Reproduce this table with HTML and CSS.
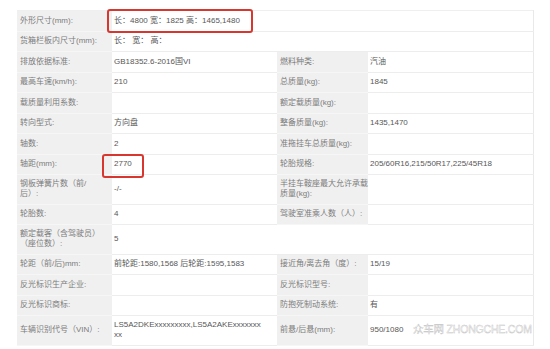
FILE: index.html
```html
<!DOCTYPE html>
<html lang="zh-CN">
<head>
<meta charset="utf-8">
<title>车辆参数</title>
<link rel="stylesheet" href="styles.css">
</head>
<body>
<div class="page">
  <div class="sheet">
    <table class="spec">
      <colgroup>
        <col class="c-lab1"><col class="c-val1"><col class="c-lab2"><col class="c-val2">
      </colgroup>
      <tbody>
        <tr><td class="lab">外形尺寸(mm):</td><td class="val" colspan="3">长：4800 宽：1825 高：1465,1480</td></tr>
        <tr><td class="lab">货箱栏板内尺寸(mm):</td><td class="val" colspan="3">长： 宽： 高：</td></tr>
        <tr><td class="lab">排放依据标准:</td><td class="val">GB18352.6-2016国VI</td><td class="lab">燃料种类:</td><td class="val">汽油</td></tr>
        <tr><td class="lab">最高车速(km/h):</td><td class="val">210</td><td class="lab">总质量(kg):</td><td class="val">1845</td></tr>
        <tr><td class="lab">载质量利用系数:</td><td class="val"></td><td class="lab">额定载质量(kg):</td><td class="val"></td></tr>
        <tr><td class="lab">转向型式:</td><td class="val">方向盘</td><td class="lab">整备质量(kg):</td><td class="val">1435,1470</td></tr>
        <tr><td class="lab">轴数:</td><td class="val">2</td><td class="lab">准拖挂车总质量(kg):</td><td class="val"></td></tr>
        <tr><td class="lab">轴距(mm):</td><td class="val">2770</td><td class="lab">轮胎规格:</td><td class="val">205/60R16,215/50R17,225/45R18</td></tr>
        <tr class="tall"><td class="lab">钢板弹簧片数（前/<br>后）:</td><td class="val">-/-</td><td class="lab">半挂车鞍座最大允许承载<br>质量(kg):</td><td class="val"></td></tr>
        <tr><td class="lab">轮胎数:</td><td class="val">4</td><td class="lab">驾驶室准乘人数（人）:</td><td class="val"></td></tr>
        <tr class="tall"><td class="lab">额定载客（含驾驶员）<br>（座位数）:</td><td class="val" colspan="3">5</td></tr>
        <tr><td class="lab">轮距（前/后)mm:</td><td class="val">前轮距:1580,1568 后轮距:1595,1583</td><td class="lab">接近角/离去角（度）:</td><td class="val">15/19</td></tr>
        <tr><td class="lab">反光标识生产企业:</td><td class="val"></td><td class="lab">反光标识型号:</td><td class="val"></td></tr>
        <tr><td class="lab">反光标识商标:</td><td class="val"></td><td class="lab">防抱死制动系统:</td><td class="val">有</td></tr>
        <tr class="tall"><td class="lab">车辆识别代号（VIN）:</td><td class="val nowrap">LS5A2DKExxxxxxxxx,LS5A2AKExxxxxxx<br>xx</td><td class="lab">前悬/后悬(mm):</td><td class="val">950/1080</td></tr>
      </tbody>
    </table>
    <div class="mark mark-dim"></div>
    <div class="mark mark-wb"></div>
    <div class="watermark">众车网 ZHONGCHE.COM</div>
  </div>
</div>
</body>
</html>
```

FILE: styles.css
```css
* { box-sizing: border-box; }
html, body { margin: 0; padding: 0; background: #fff; }
body {
  font-family: "Liberation Sans", "Noto Sans CJK SC", sans-serif;
  font-size: 8px;
  width: 550px;
  height: 349px;
  overflow: hidden;
}
.page { padding: 10px 0 0 17px; }
.sheet { position: relative; width: 516px; }
.spec {
  width: 516px;
  table-layout: fixed;
  border-collapse: collapse;
  border-top: 1px solid #efefef;
  border-right: 1px solid #e9e9e9;
}
.c-lab1 { width: 95px; }
.c-val1 { width: 165px; }
.c-lab2 { width: 91px; }
.c-val2 { width: 165px; }
.spec tr { height: 20.5px; }
.spec tr.tall { height: 29.5px; }
.spec td {
  padding: 0 2px 0 2px;
  vertical-align: middle;
  line-height: 10px;
  border-bottom: 1px solid #ededed;
  white-space: nowrap;
  overflow: visible;
}
.spec td.lab {
  background: #f0f0f0;
  color: #7c7c7c;
  padding-left: 3px;
  border-bottom-color: #f6f6f6;
}
.spec td.val { color: #575757; }
.mark {
  position: absolute;
  border: 2px solid #d8372f;
  border-radius: 3px;
}
.mark-dim { left: 90px; top: -1px; width: 146px; height: 24px; }
.mark-wb { left: 85px; top: 144px; width: 42px; height: 24px; }
.watermark {
  position: absolute;
  left: 396px;
  top: 311px;
  font-family: "Liberation Sans", "Noto Sans CJK SC", sans-serif;
  font-size: 10.5px;
  letter-spacing: -0.2px;
  color: rgba(255,255,255,0.9);
  -webkit-text-stroke: 0.4px #c2c2c2;
  white-space: nowrap;
}
```
